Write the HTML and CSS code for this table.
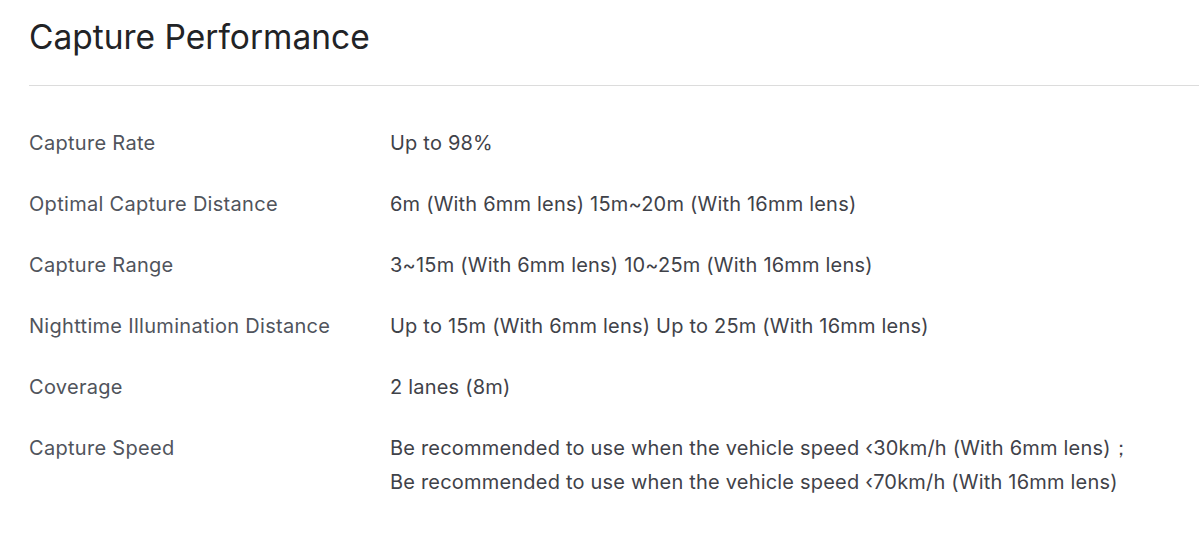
FILE: index.html
```html
<!DOCTYPE html>
<html>
<head>
<meta charset="utf-8">
<link rel="stylesheet" href="styles.css">
</head>
<body>
<section class="spec">
  <h2 class="spec-title">Capture Performance</h2>
  <div class="spec-divider"></div>
  <div class="spec-table">
    <div class="spec-label">Capture Rate</div>
    <div class="spec-value">Up to 98%</div>
    <div class="spec-label">Optimal Capture Distance</div>
    <div class="spec-value">6m (With 6mm lens) 15m~20m (With 16mm lens)</div>
    <div class="spec-label">Capture Range</div>
    <div class="spec-value">3~15m (With 6mm lens) 10~25m (With 16mm lens)</div>
    <div class="spec-label">Nighttime Illumination Distance</div>
    <div class="spec-value">Up to 15m (With 6mm lens) Up to 25m (With 16mm lens)</div>
    <div class="spec-label">Coverage</div>
    <div class="spec-value">2 lanes (8m)</div>
    <div class="spec-label">Capture Speed</div>
    <div class="spec-value">Be recommended to use when the vehicle speed &lsaquo;30km/h (With 6mm lens)；<br>Be recommended to use when the vehicle speed &lsaquo;70km/h (With 16mm lens)</div>
  </div>
</section>
</body>
</html>
```
FILE: styles.css
```css
html, body {
  margin: 0;
  padding: 0;
  background: #ffffff;
}
body {
  font-family: Inter, "Noto Sans", "Liberation Sans", sans-serif;
}
.spec {
  padding: 17px 0 0 29px;
}
.spec-title {
  margin: 0;
  font-size: 33.5px;
  line-height: 40px;
  font-weight: 400;
  color: #222326;
  letter-spacing: 0;
}
.spec-divider {
  height: 1px;
  background: #dcdcdc;
  margin-top: 28px;
}
.spec-table {
  display: grid;
  grid-template-columns: 361px 1fr;
  margin-top: 26px;
}
.spec-label, .spec-value {
  font-size: 20px;
  line-height: 34px;
  padding: 13.5px 0;
  letter-spacing: 0.3px;
  color: #50545c;
}
.spec-value {
  letter-spacing: 0.2px;
  color: #3f4249;
}
```
